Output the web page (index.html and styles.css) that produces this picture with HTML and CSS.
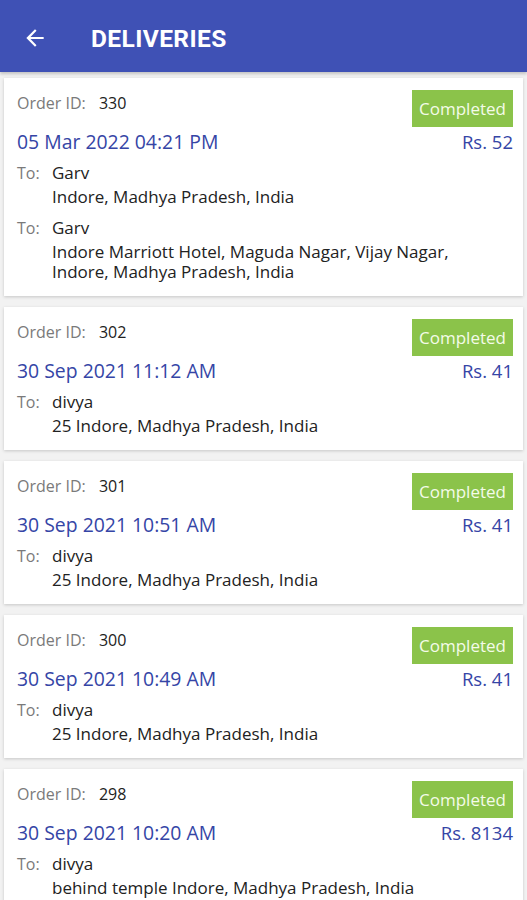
FILE: index.html
```html
<!DOCTYPE html>
<html lang="en">

<head>
    <meta charset="UTF-8">
    <meta name="viewport" content="width=device-width, initial-scale=1.0">
    <title>Deliveries</title>
    <link rel="stylesheet" href="styles.css">
</head>

<body>
    <header class="topbar">
        <svg class="back" viewBox="0 0 24 24" width="26" height="26">
            <path d="M20 11H7.83l5.59-5.59L12 4l-8 8 8 8 1.41-1.41L7.83 13H20v-2z" fill="#fff" />
        </svg>
        <h1>DELIVERIES</h1>
    </header>

    <main class="list">
        <article class="card">
            <div class="head">
                <p class="orderId"><span class="label">Order ID:</span> 330</p>
                <span class="status">Completed</span>
            </div>
            <div class="sub">
                <p class="date">05 Mar 2022 04:21 PM</p>
                <p class="price">Rs. 52</p>
            </div>
            <div class="dest">
                <span class="label">To:</span>
                <div>
                    <p class="name">Garv</p>
                    <p class="addr">Indore, Madhya Pradesh, India</p>
                </div>
            </div>
            <div class="dest">
                <span class="label">To:</span>
                <div>
                    <p class="name">Garv</p>
                    <p class="addr">Indore Marriott Hotel, Maguda Nagar, Vijay Nagar, Indore, Madhya Pradesh, India</p>
                </div>
            </div>
        </article>

        <article class="card">
            <div class="head">
                <p class="orderId"><span class="label">Order ID:</span> 302</p>
                <span class="status">Completed</span>
            </div>
            <div class="sub">
                <p class="date">30 Sep 2021 11:12 AM</p>
                <p class="price">Rs. 41</p>
            </div>
            <div class="dest">
                <span class="label">To:</span>
                <div>
                    <p class="name">divya</p>
                    <p class="addr">25 Indore, Madhya Pradesh, India</p>
                </div>
            </div>
        </article>

        <article class="card">
            <div class="head">
                <p class="orderId"><span class="label">Order ID:</span> 301</p>
                <span class="status">Completed</span>
            </div>
            <div class="sub">
                <p class="date">30 Sep 2021 10:51 AM</p>
                <p class="price">Rs. 41</p>
            </div>
            <div class="dest">
                <span class="label">To:</span>
                <div>
                    <p class="name">divya</p>
                    <p class="addr">25 Indore, Madhya Pradesh, India</p>
                </div>
            </div>
        </article>

        <article class="card">
            <div class="head">
                <p class="orderId"><span class="label">Order ID:</span> 300</p>
                <span class="status">Completed</span>
            </div>
            <div class="sub">
                <p class="date">30 Sep 2021 10:49 AM</p>
                <p class="price">Rs. 41</p>
            </div>
            <div class="dest">
                <span class="label">To:</span>
                <div>
                    <p class="name">divya</p>
                    <p class="addr">25 Indore, Madhya Pradesh, India</p>
                </div>
            </div>
        </article>

        <article class="card">
            <div class="head">
                <p class="orderId"><span class="label">Order ID:</span> 298</p>
                <span class="status">Completed</span>
            </div>
            <div class="sub">
                <p class="date">30 Sep 2021 10:20 AM</p>
                <p class="price">Rs. 8134</p>
            </div>
            <div class="dest">
                <span class="label">To:</span>
                <div>
                    <p class="name">divya</p>
                    <p class="addr">behind temple Indore, Madhya Pradesh, India</p>
                </div>
            </div>
        </article>
    </main>
</body>

</html>
```

FILE: styles.css
```css
* {
    box-sizing: border-box;
    margin: 0;
    padding: 0;
}

body {
    background-color: #f2f2f2;
    font-family: "Open Sans", "Liberation Sans", sans-serif;
    color: #222;
    overflow: hidden;
}

.topbar {
    height: 72px;
    background-color: #3f51b5;
    display: flex;
    align-items: center;
    padding: 4px 0 0 22px;
    box-shadow: 0 2px 3px rgba(0, 0, 0, 0.2);
}

.back {
    width: 26px;
    height: 26px;
}

.topbar h1 {
    margin-left: 43px;
    color: #fff;
    font-family: "Roboto", sans-serif;
    font-size: 24.5px;
    font-weight: 700;
    letter-spacing: 0.4px;
}

.list {
    padding: 6px 4px;
    display: flex;
    flex-direction: column;
    gap: 11px;
}

.card {
    background-color: #fff;
    padding: 12px 10px 14px 13px;
    box-shadow: 0 1px 3px rgba(0, 0, 0, 0.18);
}

.head {
    display: flex;
    justify-content: space-between;
    align-items: flex-start;
}

.orderId {
    margin-top: 2px;
    font-size: 16px;
    line-height: 22px;
}

.label {
    color: #7a7a7a;
    display: inline-block;
    width: 35px;
    font-size: 16px;
}

.orderId .label {
    width: auto;
    margin-right: 9px;
}

.status {
    background-color: #8bc34a;
    color: #f4fbe9;
    font-size: 17px;
    width: 101px;
    height: 37px;
    display: grid;
    place-items: center;
}

.sub {
    margin-top: 3px;
    display: flex;
    justify-content: space-between;
    line-height: 24px;
    color: #3545a6;
    font-size: 18.5px;
}

.date {
    font-size: 19.4px;
}

.dest {
    margin-top: 8px;
    display: flex;
    font-size: 17px;
}

.dest + .dest {
    margin-top: 10px;
}

.dest .label {
    line-height: 22px;
    flex: none;
}

.name {
    line-height: 22px;
}

.addr {
    margin-top: 3px;
    line-height: 20px;
    padding-right: 40px;
}
```
